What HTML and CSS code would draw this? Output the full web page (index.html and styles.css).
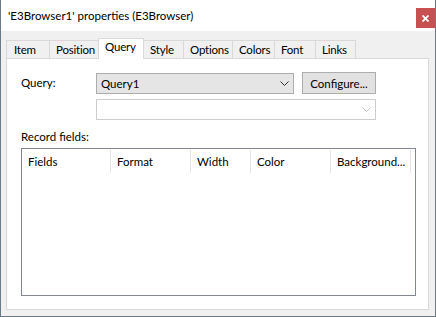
FILE: index.html
```html
<!DOCTYPE html>
<html lang="en">
<head>
    <meta charset="UTF-8">
    <title>'E3Browser1' properties (E3Browser)</title>
    <link rel="stylesheet" href="styles.css">
</head>
<body>
    <div class="window">
        <div class="titlebar">
            <span class="title">'E3Browser1' properties (E3Browser)</span>
            <div class="close-btn">
                <svg width="7" height="7" viewBox="0 0 7 7">
                    <path d="M0.5 0.5 L6.5 6.5 M6.5 0.5 L0.5 6.5" stroke="#fff" stroke-width="1.8"/>
                </svg>
            </div>
        </div>

        <div class="tabs">
            <div class="tab tab-item">Item</div>
            <div class="tab tab-position">Position</div>
            <div class="tab tab-query active">Query</div>
            <div class="tab tab-style">Style</div>
            <div class="tab tab-options">Options</div>
            <div class="tab tab-colors">Colors</div>
            <div class="tab tab-font">Font</div>
            <div class="tab tab-links">Links</div>
        </div>

        <div class="panel">
            <div class="query-row">
                <span class="field-label">Query:</span>
                <div class="combo">
                    <span>Query1</span>
                    <svg class="chevron" width="9" height="5" viewBox="0 0 9 5">
                        <polyline points="0.5,0.5 4.5,4.5 8.5,0.5" fill="none" stroke="#333" stroke-width="1"/>
                    </svg>
                </div>
                <button class="btn">Configure...</button>
            </div>
            <div class="sub-row">
                <div class="combo combo-disabled">
                    <svg class="chevron" width="9" height="5" viewBox="0 0 9 5">
                        <polyline points="0.5,0.5 4.5,4.5 8.5,0.5" fill="none" stroke="#bfbfbf" stroke-width="1"/>
                    </svg>
                </div>
            </div>

            <div class="section-label">Record fields:</div>
            <div class="listview">
                <div class="list-header">
                    <div class="col col-fields">Fields</div>
                    <div class="col col-format">Format</div>
                    <div class="col col-width">Width</div>
                    <div class="col col-color">Color</div>
                    <div class="col col-bg">Background...</div>
                </div>
            </div>
        </div>
    </div>
</body>
</html>
```

FILE: styles.css
```css
* {
    margin: 0;
    padding: 0;
    box-sizing: border-box;
}

:root {
    --face: #f0f0f0;
    --tab-border: #d9d9d9;
    --ctl-border: #adadad;
    --text: #000000;
}

body {
    font-family: Lato, "Noto Sans", sans-serif;
    font-size: 11.5px;
    color: var(--text);
    background: #ffffff;
}

.window {
    width: 436px;
    height: 317px;
    border: 1px solid #6b7b86;
    border-top: none;
    background: var(--face);
    display: flex;
    flex-direction: column;
}

.titlebar {
    height: 31px;
    background: #ffffff;
    display: flex;
    justify-content: space-between;
    padding-left: 7px;
}

.title {
    font-size: 11.5px;
    line-height: 31px;
}

.close-btn {
    width: 19px;
    height: 20px;
    margin-top: 8px;
    background: #c75050;
    display: flex;
    align-items: center;
    justify-content: center;
}

/* Abas */
.tabs {
    display: flex;
    align-items: flex-end;
    padding: 7px 0 0 5px;
}

.tab {
    height: 18px;
    border: 1px solid var(--tab-border);
    border-bottom: none;
    margin-left: -1px;
    padding-left: 6px;
    line-height: 17px;
    letter-spacing: -0.2px;
    background: var(--face);
    white-space: nowrap;
}

.tab:first-child {
    margin-left: 0;
    padding-left: 7px;
}

.tab.active {
    height: 21px;
    background: #ffffff;
    margin-bottom: -1px;
    line-height: 16px;
    position: relative;
    z-index: 1;
}

.tab-item { width: 44px; }
.tab-position { width: 50px; }
.tab-query { width: 46px; }
.tab-style { width: 41px; }
.tab-options { width: 50px; }
.tab-colors { width: 43px; }
.tab-font { width: 42px; }
.tab-links { width: 41px; }

/* Painel */
.panel {
    flex: 1;
    margin: 0 6px 6px 5px;
    background: #ffffff;
    border: 1px solid var(--tab-border);
    padding: 14px 0 0 14px;
    display: flex;
    flex-direction: column;
}

.query-row {
    display: flex;
    align-items: center;
}

.field-label {
    width: 75px;
    margin-top: -2px;
}

.combo {
    width: 198px;
    height: 21px;
    border: 1px solid var(--ctl-border);
    background: #e5e5e5;
    display: flex;
    align-items: center;
    justify-content: space-between;
    padding: 0 4px 0 4px;
}

.btn {
    width: 74px;
    height: 22px;
    margin-left: 8px;
    margin-top: -1px;
    border: 1px solid var(--ctl-border);
    background: #e1e1e1;
    font-family: inherit;
    font-size: 11.5px;
    color: var(--text);
}

.sub-row {
    padding-left: 75px;
    margin-top: 5px;
}

.combo-disabled {
    width: 280px;
    background: #ffffff;
    border-color: #cccccc;
    justify-content: flex-end;
}

.section-label {
    margin-top: 10px;
    height: 18px;
}

/* Lista */
.listview {
    width: 395px;
    height: 148px;
    border: 1px solid #828790;
    background: #ffffff;
}

.list-header {
    display: flex;
    height: 24px;
    padding-top: 1px;
}

.col {
    border-right: 1px solid #e5e5e5;
    padding-left: 6px;
    line-height: 23px;
    white-space: nowrap;
}

.col-fields { width: 89px; }
.col-format { width: 80px; }
.col-width { width: 60px; }
.col-color { width: 80px; }
.col-bg { width: 80px; }
```
